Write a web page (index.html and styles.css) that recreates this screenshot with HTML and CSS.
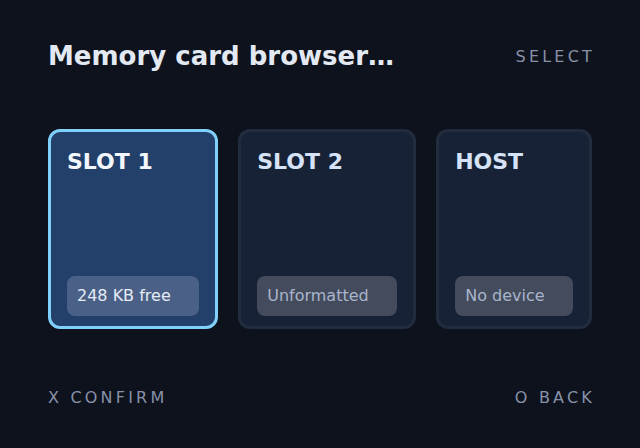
FILE: index.html
```html
<!DOCTYPE html>
<html>
<head>
<meta charset="utf-8">
<link rel="stylesheet" href="styles.css">
</head>
<body>
<div class="screen">
  <header class="top">
    <h1 class="title">Memory card browser…</h1>
    <span class="hint">SELECT</span>
  </header>
  <main class="cards">
    <div class="card selected">
      <div class="card-title">SLOT 1</div>
      <div class="badge">248 KB free</div>
    </div>
    <div class="card">
      <div class="card-title">SLOT 2</div>
      <div class="badge">Unformatted</div>
    </div>
    <div class="card">
      <div class="card-title">HOST</div>
      <div class="badge">No device</div>
    </div>
  </main>
  <footer class="bottom">
    <span class="hint">X CONFIRM</span>
    <span class="hint">O BACK</span>
  </footer>
</div>
</body>
</html>
```
FILE: styles.css
```css
html, body {
  margin: 0;
  padding: 0;
  background: #0d121c;
}
body {
  font-family: "DejaVu Sans", sans-serif;
  width: 640px;
  height: 448px;
  overflow: hidden;
}
.screen {
  box-sizing: border-box;
  height: 448px;
  padding: 0 48px;
  display: flex;
  flex-direction: column;
}
.top {
  display: flex;
  justify-content: space-between;
  align-items: center;
  padding-top: 41px;
  height: 30px;
  margin-bottom: 19px;
}
.top .hint {
  margin-top: 2px;
}
.title {
  margin: 0;
  font-size: 26px;
  line-height: 30px;
  font-weight: bold;
  color: #e3e9f3;
}
.hint {
  font-size: 16px;
  line-height: 20px;
  letter-spacing: 0.2em;
  color: #8891a9;
  margin-right: -3px;
}
.cards {
  display: flex;
  gap: 20px;
  margin-top: 39px;
}
.card {
  flex: 1 1 auto;
  box-sizing: border-box;
  height: 200px;
  border: 3px solid #212c3f;
  border-radius: 12px;
  background: #172236;
  padding: 16px 16px 10px;
  display: flex;
  flex-direction: column;
  justify-content: space-between;
}
.card.selected {
  background: #22406a;
  border-color: #7fd0fb;
}
.card-title {
  font-size: 22px;
  line-height: 28px;
  font-weight: bold;
  color: #d6e2f7;
}
.selected .card-title {
  color: #f3f6fb;
}
.badge {
  font-size: 16px;
  line-height: 20px;
  padding: 10px;
  border-radius: 8px;
  background: #434b5c;
  color: #a9b5cc;
  white-space: nowrap;
}
.selected .badge {
  background: #4b6086;
  color: #e6ecf6;
}
.bottom {
  display: flex;
  justify-content: space-between;
  margin-top: 59px;
}
```
